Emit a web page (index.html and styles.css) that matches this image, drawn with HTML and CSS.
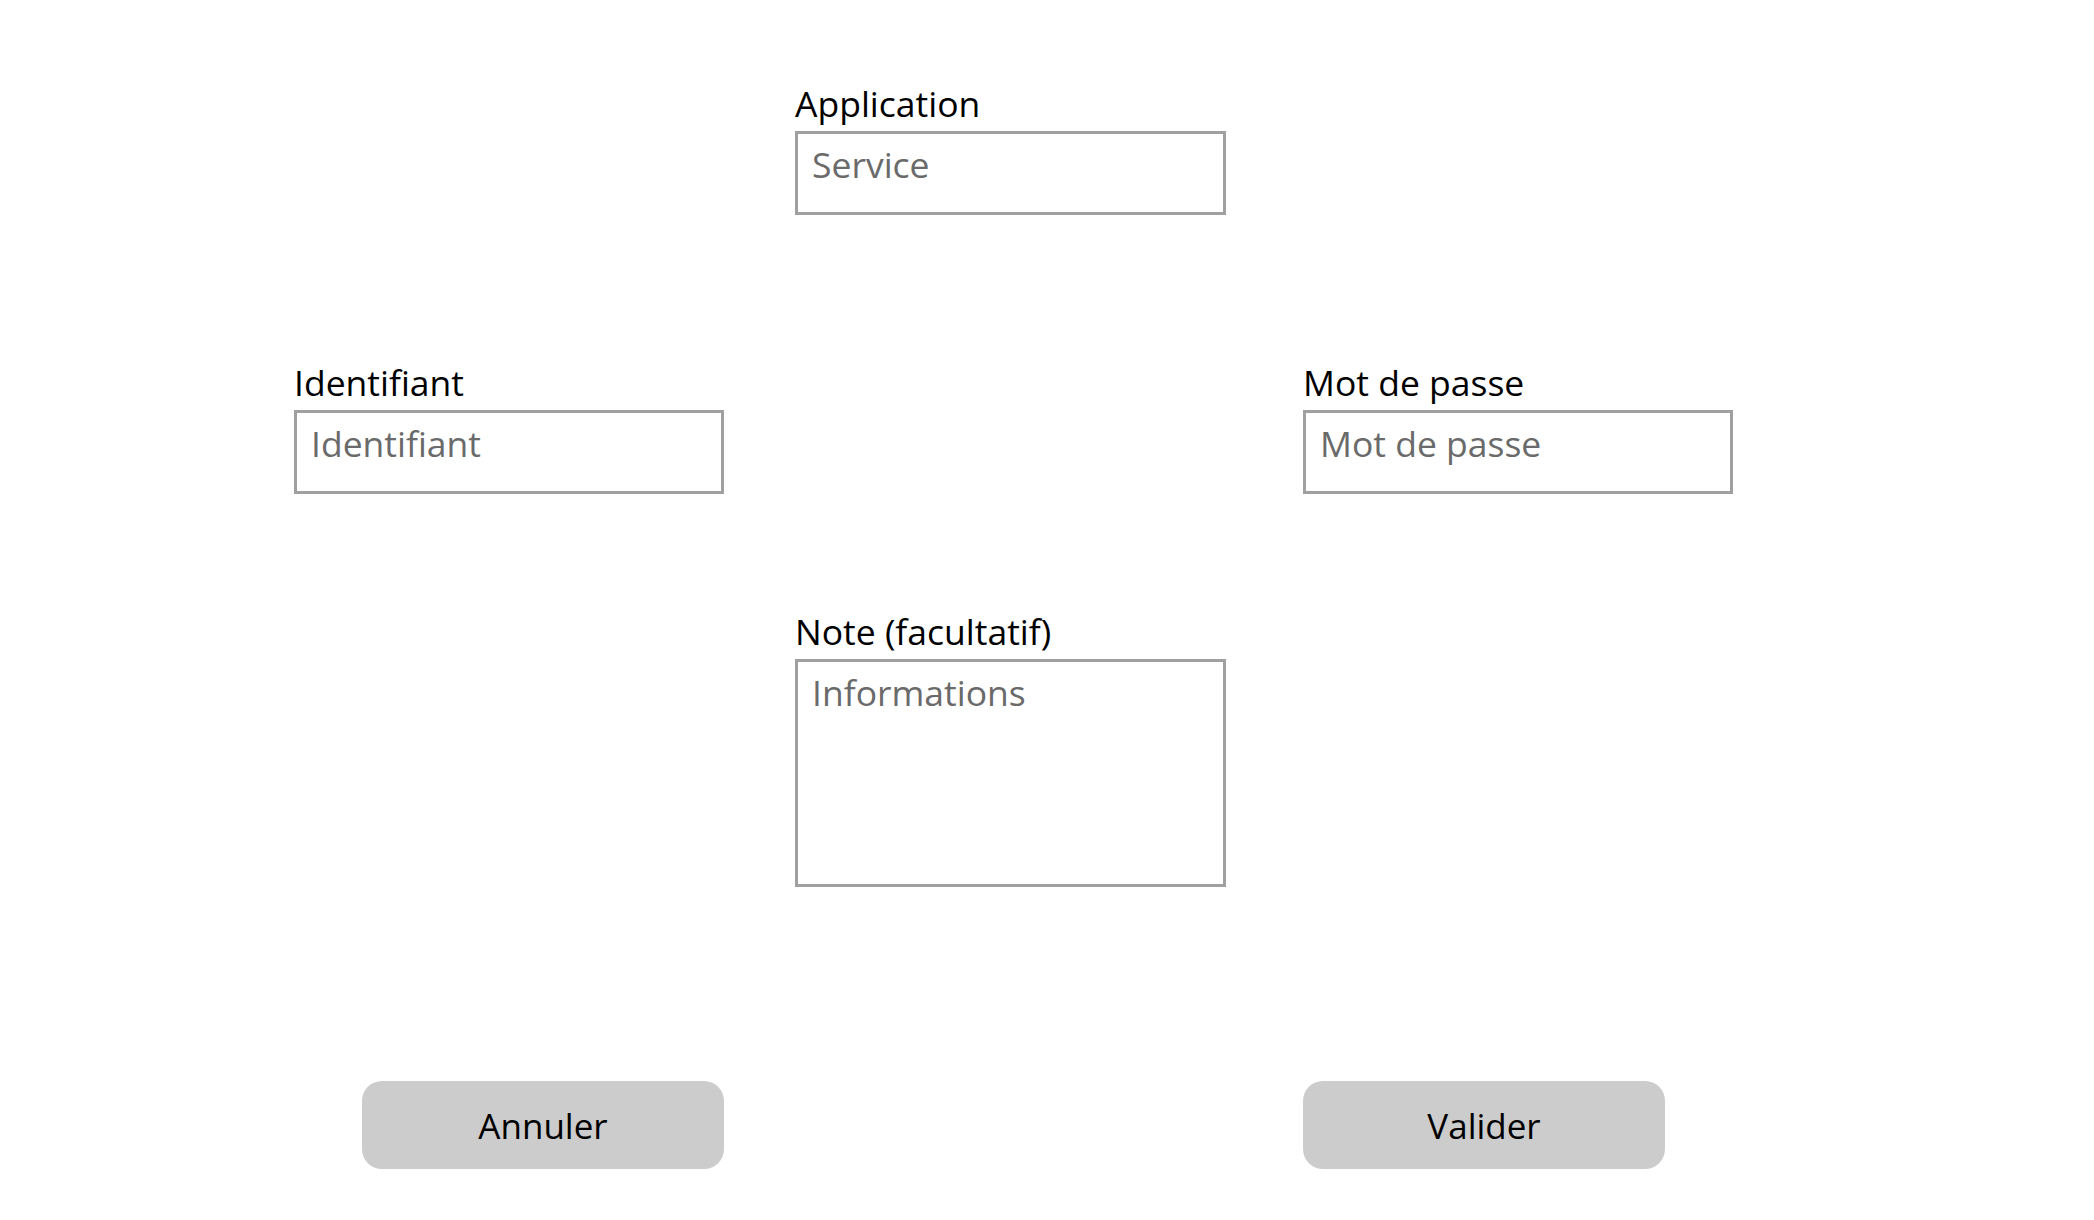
FILE: index.html
```html
<!DOCTYPE html>
<html lang="fr">

<head>
  <meta charset="UTF-8" />
  <title>Nouveau compte</title>
  <link rel="stylesheet" href="styles.css">
</head>

<body>
  <form class="entry-form" onsubmit="return false;">
    <div class="field field-app">
      <label for="service">Application</label>
      <input type="text" id="service" placeholder="Service" autocomplete="off" />
    </div>

    <div class="field field-login">
      <label for="login">Identifiant</label>
      <input type="text" id="login" placeholder="Identifiant" autocomplete="off" />
    </div>

    <div class="field field-password">
      <label for="password">Mot de passe</label>
      <input type="text" id="password" placeholder="Mot de passe" autocomplete="off" />
    </div>

    <div class="field field-note">
      <label for="note">Note (facultatif)</label>
      <textarea id="note" placeholder="Informations"></textarea>
    </div>

    <button type="button" class="btn btn-cancel">Annuler</button>
    <button type="submit" class="btn btn-submit">Valider</button>
  </form>
</body>

</html>
```

FILE: styles.css
```css
:root {
  --text: #000000;
  --placeholder: #6a6a6a;
  --border: #a0a0a0;
  --button: #cccccc;
  --font: 'Open Sans', 'Noto Sans', sans-serif;
}

* {
  box-sizing: border-box;
  margin: 0;
  padding: 0;
}

body {
  background-color: #ffffff;
  color: var(--text);
  font-family: var(--font);
}

.entry-form {
  display: grid;
  grid-template-columns: 430px 71px 431px 77px 430px;
  grid-template-rows: auto auto auto auto;
  padding: 81px 0 0 294px;
}

.field {
  display: flex;
  flex-direction: column;
  gap: 6px;
}

.field label {
  font-size: 35.5px;
  line-height: 44px;
}

.field input,
.field textarea {
  width: 100%;
  height: 84px;
  padding: 8px 14px 26px 14px;
  border: 3px solid var(--border);
  border-radius: 0;
  background: #ffffff;
  color: var(--text);
  font-family: var(--font);
  font-size: 35.5px;
  line-height: 44px;
  outline: none;
  resize: none;
}

.field textarea {
  height: 228px;
}

.field input::placeholder,
.field textarea::placeholder {
  color: var(--placeholder);
}

.field-app {
  grid-column: 3;
  grid-row: 1;
}

.field-login {
  grid-column: 1;
  grid-row: 2;
  margin-top: 145px;
}

.field-password {
  grid-column: 5;
  grid-row: 2;
  margin-top: 145px;
}

.field-note {
  grid-column: 3;
  grid-row: 3;
  margin-top: 115px;
}

.btn {
  grid-row: 4;
  width: 362px;
  height: 88px;
  margin-top: 194px;
  border: none;
  border-radius: 20px;
  background-color: var(--button);
  color: var(--text);
  font-family: var(--font);
  font-size: 35px;
  cursor: pointer;
}

.btn-cancel {
  grid-column: 1;
  justify-self: end;
}

.btn-submit {
  grid-column: 5;
  justify-self: start;
}
```
